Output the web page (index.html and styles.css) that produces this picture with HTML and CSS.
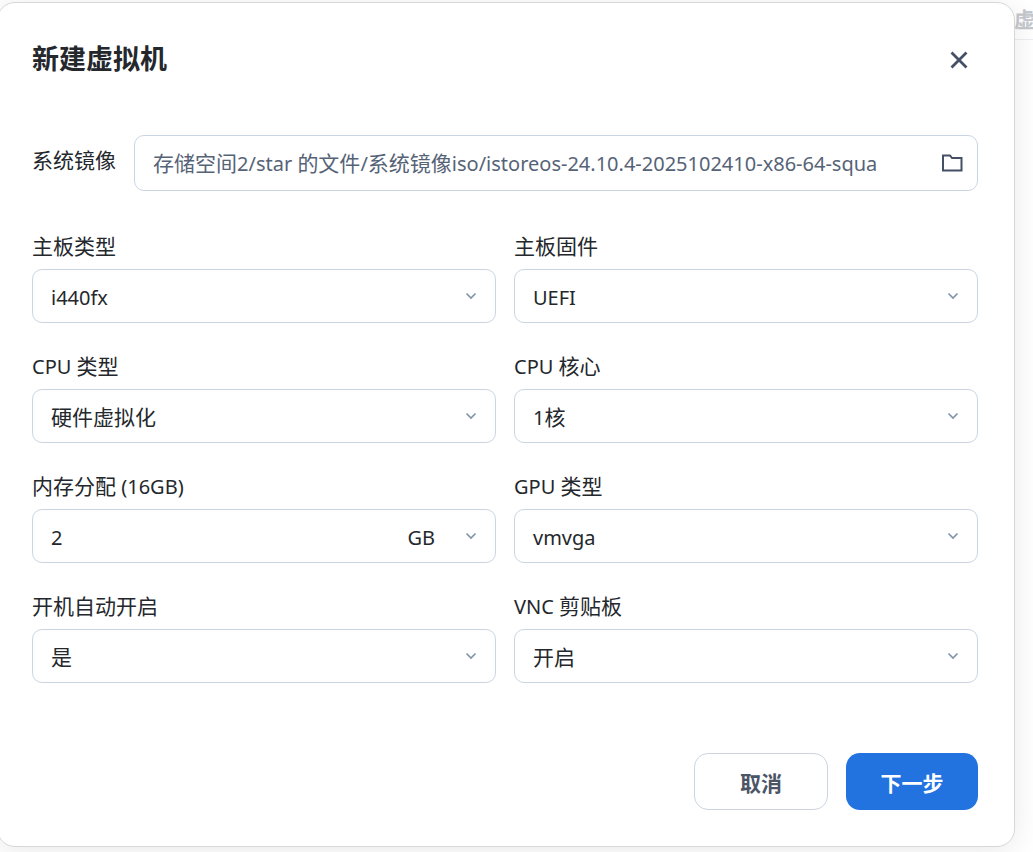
FILE: index.html
```html
<!DOCTYPE html>
<html lang="zh">
<head>
<meta charset="utf-8">
<title>新建虚拟机</title>
<link rel="stylesheet" href="styles.css">
</head>
<body>
<div class="backdrop">
  <span class="behind-title">虚</span>
  <div class="behind-rule"></div>
  <main class="dialog">
    <header class="dialog-head">
      <h1 class="dialog-title">新建虚拟机</h1>
      <svg class="close-icon" viewBox="0 0 24 24" width="24" height="24" fill="none"><path d="M4.500 4.500l15 15M19.500 4.500l-15 15"/></svg>
    </header>
    <div class="image-row">
      <label class="image-label">系统镜像</label>
      <div class="field image-field">
        <span class="image-path">存储空间<span class="lat">2/star </span>的文件<span class="lat">/</span>系统镜像<span class="lat">iso/istoreos-24.10.4-2025102410-x86-64-squa</span></span>
        <svg class="folder-icon" viewBox="0 0 22 20" width="22" height="20" fill="none"><path d="M2 2.500h7l2 2.500h9.500v12.500H2z"/></svg>
      </div>
    </div>
    <div class="form-grid">
      <div class="form-item"><label class="item-label">主板类型</label><div class="field"><span class="val lat">i440fx</span><svg class="chev" viewBox="0 0 12 8" width="12" height="8" fill="none"><path d="M1.500 1.500L6 6l4.500-4.500"/></svg></div></div>
      <div class="form-item"><label class="item-label">主板固件</label><div class="field"><span class="val lat">UEFI</span><svg class="chev" viewBox="0 0 12 8" width="12" height="8" fill="none"><path d="M1.500 1.500L6 6l4.500-4.500"/></svg></div></div>
      <div class="form-item"><label class="item-label"><span class="lat">CPU </span>类型</label><div class="field"><span class="val">硬件虚拟化</span><svg class="chev" viewBox="0 0 12 8" width="12" height="8" fill="none"><path d="M1.500 1.500L6 6l4.500-4.500"/></svg></div></div>
      <div class="form-item"><label class="item-label"><span class="lat">CPU </span>核心</label><div class="field"><span class="val"><span class="lat">1</span>核</span><svg class="chev" viewBox="0 0 12 8" width="12" height="8" fill="none"><path d="M1.500 1.500L6 6l4.500-4.500"/></svg></div></div>
      <div class="form-item"><label class="item-label">内存分配<span class="lat"> (16GB)</span></label><div class="field"><span class="val lat">2</span><span class="unit lat">GB</span><svg class="chev" viewBox="0 0 12 8" width="12" height="8" fill="none"><path d="M1.500 1.500L6 6l4.500-4.500"/></svg></div></div>
      <div class="form-item"><label class="item-label"><span class="lat">GPU </span>类型</label><div class="field"><span class="val lat">vmvga</span><svg class="chev" viewBox="0 0 12 8" width="12" height="8" fill="none"><path d="M1.500 1.500L6 6l4.500-4.500"/></svg></div></div>
      <div class="form-item"><label class="item-label">开机自动开启</label><div class="field"><span class="val">是</span><svg class="chev" viewBox="0 0 12 8" width="12" height="8" fill="none"><path d="M1.500 1.500L6 6l4.500-4.500"/></svg></div></div>
      <div class="form-item"><label class="item-label"><span class="lat">VNC </span>剪贴板</label><div class="field"><span class="val">开启</span><svg class="chev" viewBox="0 0 12 8" width="12" height="8" fill="none"><path d="M1.500 1.500L6 6l4.500-4.500"/></svg></div></div>
    </div>
    <footer class="dialog-foot">
      <button class="btn btn-cancel">取消</button>
      <button class="btn btn-next">下一步</button>
    </footer>
  </main>
</div>
</body>
</html>
```
FILE: styles.css
```css
* { box-sizing: border-box; }
html, body { margin: 0; height: 100%; overflow: hidden; }
body {
  background: #fff;
  font-family: "Noto Sans", "Noto Sans CJK SC", sans-serif;
  font-size: 21px;
  color: #24272c;
}
.lat { font-size: 20px; }
.backdrop { position: relative; width: 1033px; height: 852px; overflow: hidden; padding-top: 2px; }
.behind-title { position: absolute; left: 1014px; top: 5px; width: 19px; overflow: hidden; font-size: 21px; font-weight: 700; line-height: 28px; color: #c4c7cc; }
.behind-rule { position: absolute; left: 1014px; right: 0; top: 39px; height: 1px; background: #eceef1; }
.dialog {
  position: relative;
  width: 1018px;
  height: 845px;
  margin-left: -3px;
  background: #fff;
  border: 1px solid #d5d7da;
  border-radius: 18px;
  box-shadow: 0 4px 30px rgba(0,0,0,.09);
  padding: 0 36px 0 34px;
}
.dialog-head { height: 112px; display: flex; align-items: center; justify-content: space-between; padding: 0 7px 0 0; margin-bottom: 20px; }
.dialog-title { margin: 0; font-size: 27px; font-weight: 700; line-height: 36px; }
.close-icon { stroke: #445065; stroke-width: 2.800; transform: translateY(1px); }
.image-row { display: flex; align-items: center; gap: 18px; margin-bottom: 42px; }
.image-label { line-height: 28px; margin-bottom: 6px; }
.field {
  height: 54px;
  display: flex; align-items: center;
  padding: 0 18px;
  border: 1px solid #c9d5e2;
  border-radius: 10px;
  background: #fff;
}
.image-field { flex: 1; height: 56px; color: #566377; justify-content: space-between; padding-right: 14px; }
.image-path { white-space: nowrap; overflow: hidden; transform: translateY(-1px); }
.folder-icon { stroke: #445065; stroke-width: 2; flex: none; }
.form-grid { display: grid; grid-template-columns: 464px 464px; column-gap: 18px; row-gap: 30px; }
.form-item { display: flex; flex-direction: column; }
.item-label { height: 28px; line-height: 28px; margin-top: -1px; margin-bottom: 9px; white-space: nowrap; }
.val { flex: 1; }
.val.lat { transform: translateY(1px); }
.unit { margin-right: 30px; transform: translateY(1px); }
.chev { stroke: #8294ac; stroke-width: 1.700; flex: none; margin-top: -1px; }
.dialog-foot { display: flex; justify-content: flex-end; gap: 18px; margin-top: 70px; }
.btn { height: 57px; border-radius: 14px; font: 700 21px "Noto Sans", "Noto Sans CJK SC", sans-serif; }
.btn-cancel { width: 134px; background: #fff; border: 1px solid #cbd5e0; color: #4b5565; }
.btn-next { width: 132px; background: #2272e0; border: 0; color: #fff; }
```
